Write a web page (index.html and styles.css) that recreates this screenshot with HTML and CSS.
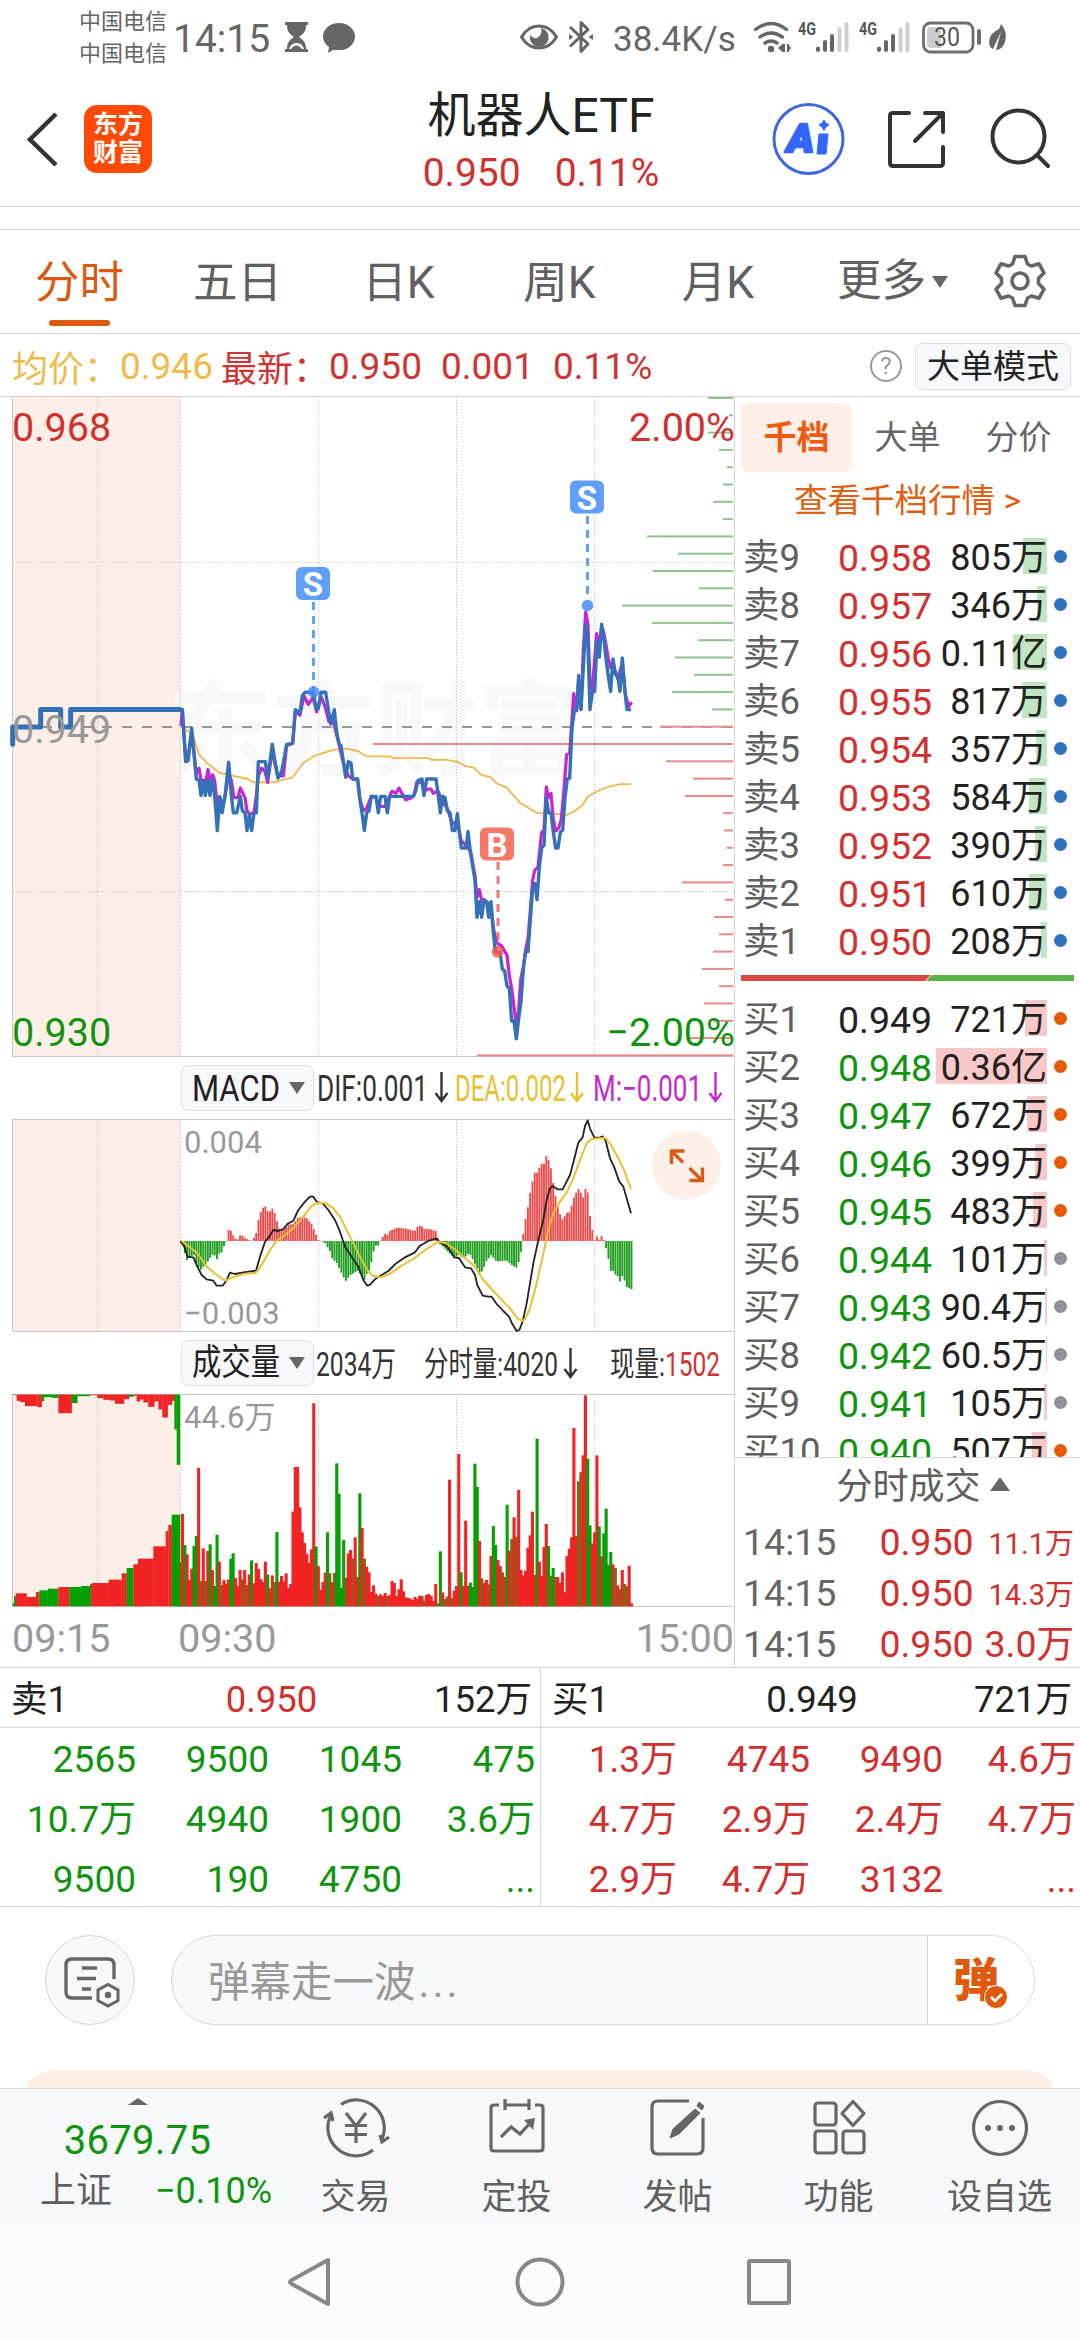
FILE: index.html
```html
<!DOCTYPE html>
<html lang="zh-CN">
<head>
<meta charset="utf-8">
<title>机器人ETF</title>
<link rel="stylesheet" href="styles.css">
</head>
<body>
<div class="status">
  <div class="carriers"><span>中国电信</span><span>中国电信</span></div>
  <span class="clock">14:15</span>
  <svg class="status-left" width="80" height="40" viewBox="280 16 80 40">
    <path fill="#666" d="M285 21h23v3h-2c0 7-3 9-7 12c4 3 7 5 7 12h2v3h-23v-3h2c0-7 3-9 7-12c-4-3-7-5-7-12h-2z"/><path fill="#fff" d="M289 48c1-4 4-6 7.500-6s6.500 2 7.500 6z" opacity=".9"/><path fill="#666" d="M291 48q5-7 11 0z"/>
    <path fill="#666" d="M339 22c9 0 16 6 16 13.500s-7 13.500-14 13.500q-6 0-8 0l-5 3l1-6c-4-3-6-6-6-10.500c0-7.500 7-13.500 16-13.500z"/>
  </svg>
  <svg class="status-mid" width="80" height="40" viewBox="516 16 80 40">
    <path fill="none" stroke="#666" stroke-width="3" d="M521.500 36Q528 25 539 25T556.500 36Q550 47 539 47T521.500 36z"/><path d="M541 27a9.500 9.500 0 1 1-11 7q3 4 7 3q6-3 4-10z" fill="#666"/>
    <path fill="none" stroke="#666" stroke-width="3" stroke-linejoin="round" d="M570 26l18 17l-7 7.500v-29l7 7l-18 17"/><path d="M569 33l4.500 3l-4.500 3zM593 33l-4.500 3l4.500 3z" fill="#666"/>
  </svg>
  <span class="rate">38.4K/s</span>
  <svg class="status-right" width="260" height="40" viewBox="752 16 260 40">
    <g fill="none" stroke="#666" stroke-width="3.400" stroke-linecap="round"><path d="M756.500 28.500q15.500-12 31 0M761 36q11-8 22.500 0M766 42q6-4 12 0"/></g>
    <circle cx="772" cy="48" r="3.200" fill="#666"/><path d="M785 43v8M789 43v8" stroke="#666" stroke-width="2"/><path fill="#666" d="M779 47l5-4.500v9zM792 47l-3-4v8z"/>
    <g fill="#555"><text x="799" y="34" class="net" textLength="18" lengthAdjust="spacingAndGlyphs">4G</text><text x="860" y="34" class="net" textLength="18" lengthAdjust="spacingAndGlyphs">4G</text></g>
    <g stroke="#666" stroke-width="4" stroke-linecap="round"><path d="M819 47.500v1.500M826 41v8M833 35v14M880 47.500v1.500M887 41v8M894 35v14"/></g>
    <g stroke="#cfcfcf" stroke-width="4" stroke-linecap="round"><path d="M840.500 28v21M847.500 23v26M901.500 28v21M908.500 23v26"/></g>
    <path d="M942 26V47H932Q928 47 928 43V30Q928 26 932 26z" fill="#ccc"/><rect x="924.500" y="22" width="49.500" height="29" rx="7" fill="none" stroke="#6e6e6e" stroke-width="2.800"/><path d="M980 30v12" stroke="#6e6e6e" stroke-width="4" stroke-linecap="round"/>
    <text x="935" y="45" class="batt" textLength="26" lengthAdjust="spacingAndGlyphs">30</text>
    <path fill="#666" d="M1002 23q7 8 4 18q-2 7-9 8l5-18l-8 17q-5-2-3.500-10q1.500-6 8-9q3-2 3.500-6z"/>
  </svg>
</div>

<header class="header">
  <svg class="back" width="40" height="60" viewBox="24 109 40 60"><path d="M56 114L30 139.500L56 165" fill="none" stroke="#333" stroke-width="4.500"/></svg>
  <div class="logo"><span>东方</span><span>财富</span></div>
  <div class="title"><h1>机器人ETF</h1><p><span>0.950</span><span>0.11%</span></p></div>
  <svg class="tools" width="290" height="80" viewBox="768 99 290 80">
    <circle cx="808.500" cy="139" r="34.500" fill="none" stroke="#3f66e0" stroke-width="3"/>
    <text x="787" y="151.500" class="ai" textLength="27" lengthAdjust="spacingAndGlyphs">A</text><path d="M819 134h9l-2 20h-9zM824 120q1.500 4 5 5q-3.500 1-5 5.500q-1.500-4.500-5-5.500q3.500-1 5-5z" fill="#3366ff" stroke="#3366ff" stroke-width="1" stroke-linejoin="round"/>
    <g fill="none" stroke="#333" stroke-width="4" stroke-linecap="round" stroke-linejoin="round"><path d="M909 113H893Q890 113 890 116V163Q890 166 893 166H940Q943 166 943 163V147M925 113H943V132M942 114L915 141"/><circle cx="1018.500" cy="136.500" r="26"/><path d="M1037 155l11 11"/></g>
  </svg>
</header>
<div class="strip"></div>

<nav class="tabs">
  <span class="tab on">分时</span><span class="tab">五日</span><span class="tab">日K</span><span class="tab">周K</span><span class="tab">月K</span><span class="tab more">更多<i class="down"></i></span>
  <svg class="gear" width="56" height="56" viewBox="0 0 56 56"><g fill="none" stroke="#666" stroke-width="3.600" stroke-linejoin="round"><path d="M23 3.500h10l2.500 7.500l4 2l7.500-2.200l5 9l-5.500 5.700v5l5.500 5.700l-5 9l-7.500-2.200l-4 2l-2.500 7.500h-10l-2.500-7.500l-4-2l-7.500 2.200l-5-9l5.500-5.700v-5l-5.500-5.700l5-9l7.500 2.200l4-2z"/><circle cx="28" cy="28" r="8"/></g></svg>
</nav>

<div class="info">
  <span class="avg">均价：</span><span class="avg v1">0.946</span><span class="last">最新：</span><span class="last v2">0.950</span><span class="last v3">0.001</span><span class="last v4">0.11%</span>
  <span class="help">?</span><span class="mode">大单模式</span>
</div>

<main class="main">
<section class="charts">
  <svg class="price" width="734" height="660" viewBox="0 397 734 660">
    <rect x="13" y="397" width="168" height="659" fill="#fdeee7"/>
    <text x="168" y="768" class="mark" textLength="414">东方财富</text>
    <g class="grid"><path d="M97.500 397V1056M180.500 397V1056M318.500 397V1056M456.500 397V1056M594.500 397V1056M13 562.500H734M13 891.500H734"/></g>
    <path d="M12.500 397V1056.500H734" class="frame"/>
    <path d="M22 727H734" stroke="#777" stroke-width="1.500" stroke-dasharray="10 10"/>
    <g id="depth"></g>
    <text x="12" y="441" class="lbl red">0.968</text><text x="735" y="441" class="lbl red end">2.00%</text>
    <g transform="translate(0 390) scale(.33333 .43367)" class="lines">
      <polyline class="auction" points="38,817 38,777 122,777 122,737 182,737 182,777 212,777 212,737 540,737"/>
      <polyline class="mean" points="543,777 565,787 578,795 597,840 620,860 660,883 700,890 745,897 760,905 820,905 878,893 910,860 945,843 1000,830 1040,827 1075,833 1100,845 1170,845 1180,849 1285,849 1295,853 1340,853 1370,857 1400,868 1420,870 1445,888 1470,892 1490,907 1520,917 1560,952 1610,975 1680,978 1695,981 1720,973 1748,957 1763,938 1800,922 1825,915 1860,909 1893,909"/>
      <polyline class="index" points="543,775 547,737 557,850 564,850 575,790 589,885 597,872 603,900 617,905 624,875 630,900 638,887 644,900 652,960 660,940 668,960 675,937 686,885 694,900 702,940 714,940 721,918 735,940 741,970 748,978 762,975 769,935 775,890 785,872 795,880 803,905 817,830 827,870 834,890 850,890 860,820 878,815 886,740 900,750 912,705 925,725 940,708 950,742 963,707 975,730 987,765 1000,765 1015,810 1030,860 1045,890 1060,897 1073,900 1080,945 1090,970 1100,965 1114,937 1128,940 1135,960 1155,960 1169,937 1176,925 1188,930 1197,918 1217,945 1235,940 1242,935 1250,905 1265,905 1272,925 1285,920 1293,920 1300,930 1314,925 1328,950 1342,965 1357,1000 1372,995 1384,1040 1398,1050 1412,1065 1425,1120 1431,1170 1438,1152 1446,1180 1460,1180 1473,1190 1480,1240 1490,1275 1505,1282 1521,1303 1528,1350 1535,1380 1549,1465 1556,1430 1562,1360 1570,1330 1577,1290 1584,1265 1591,1200 1598,1130 1604,1108 1614,1100 1625,1020 1632,1015 1639,915 1645,940 1653,930 1660,990 1667,1017 1676,1010 1684,990 1691,930 1700,840 1709,838 1716,760 1721,700 1730,740 1736,670 1743,735 1750,600 1757,512 1764,540 1770,680 1777,690 1784,620 1790,562 1798,590 1805,545 1813,565 1825,620 1832,640 1839,635 1853,665 1867,630 1877,705 1886,730 1895,720"/>
      <polyline class="last-price" points="540,737 547,737 557,857 564,855 575,780 589,897 597,900 603,935 610,900 616,935 624,900 630,935 637,897 644,935 652,1016 659,937 666,975 675,937 680,900 686,858 694,935 700,975 710,975 721,937 727,970 735,975 741,1016 748,980 755,1016 762,975 769,975 775,857 796,857 803,895 817,817 825,857 834,895 845,880 860,817 878,815 886,737 900,745 907,705 915,697 940,697 948,735 955,735 963,697 977,697 985,737 992,770 1003,737 1010,790 1018,817 1023,820 1030,857 1037,893 1045,857 1053,860 1058,897 1073,897 1079,940 1086,975 1093,1016 1100,975 1107,970 1114,937 1128,937 1135,975 1142,937 1155,937 1162,975 1169,937 1240,937 1247,925 1254,900 1266,897 1272,935 1280,897 1308,897 1314,930 1321,975 1328,937 1335,940 1342,970 1350,975 1357,1016 1365,1016 1372,977 1378,1020 1384,1056 1398,1056 1404,1018 1412,1070 1425,1130 1431,1216 1438,1180 1445,1216 1452,1175 1460,1180 1466,1216 1473,1180 1480,1250 1486,1295 1500,1297 1507,1335 1514,1340 1521,1375 1528,1380 1535,1455 1542,1455 1549,1496 1556,1450 1563,1410 1570,1335 1577,1295 1584,1295 1591,1220 1598,1150 1605,1138 1611,1175 1618,1100 1625,1056 1632,1050 1639,940 1646,975 1653,975 1660,1020 1667,1056 1674,1056 1681,1020 1688,1015 1695,940 1702,897 1709,895 1716,780 1723,740 1730,735 1736,658 1743,737 1750,640 1757,540 1763,570 1770,737 1777,697 1784,695 1791,580 1798,616 1805,540 1812,575 1818,620 1825,660 1832,695 1839,620 1846,655 1853,660 1860,695 1867,618 1874,690 1881,737 1893,737"/>
    </g>
    <text x="12" y="743" class="lbl grey">0.949</text>
    <text x="12" y="1046" class="lbl green">0.930</text><text x="735" y="1046" class="lbl green end">−2.00%</text>
    <g class="sell"><path d="M313.500 602V690M587.500 516V600"/><circle cx="313.500" cy="692" r="5.800"/><circle cx="587.500" cy="605.500" r="5.800"/><rect x="296" y="567" width="34" height="33" rx="6"/><rect x="570" y="480.500" width="34" height="33" rx="6"/><text x="313" y="596">S</text><text x="587" y="509.500">S</text></g>
    <g class="buy"><path d="M498 862V948"/><circle cx="497.500" cy="952" r="5.800"/><rect x="480" y="827.500" width="34" height="33" rx="6"/><text x="497" y="856.500">B</text></g>
  </svg>
  <div class="legend">
    <span class="pick"><svg width="88" height="34"><text x="0" y="29.500" class="ink" textLength="88" lengthAdjust="spacingAndGlyphs">MACD</text></svg><i class="down"></i></span>
    <svg width="420" height="62" viewBox="314 1057 420 62" class="vals">
      <text x="317" y="1101" fill="#333" textLength="111" lengthAdjust="spacingAndGlyphs">DIF:0.001</text>
      <text x="455" y="1101" fill="#e8c030" textLength="111" lengthAdjust="spacingAndGlyphs">DEA:0.002</text>
      <text x="593" y="1101" fill="#c22ccc" textLength="109" lengthAdjust="spacingAndGlyphs">M:−0.001</text>
      <g fill="none" stroke-width="2.400"><path stroke="#333" d="M441.500 1072v29m-6-8l6 8l6-8"/><path stroke="#e8c030" d="M577 1072v29m-6-8l6 8l6-8"/><path stroke="#c22ccc" d="M715.500 1072v29m-6-8l6 8l6-8"/></g>
    </svg>
  </div>
  <svg class="macd" width="734" height="213" viewBox="0 1119 734 213">
    <rect x="13" y="1120" width="168" height="211" fill="#fdeee7"/>
    <g class="grid"><path d="M97.500 1120V1331M180.500 1120V1331M318.500 1120V1331M456.500 1120V1331M594.500 1120V1331"/></g>
    <path d="M734 1119.500H12.500V1331.500H734" class="frame"/>
    <g id="hist"></g>
    <g transform="translate(0 1050) scale(.33333)" class="lines">
      <polyline class="dif" points="541,573 553,590 562,620 580,622 592,650 605,675 620,688 640,692 650,707 668,707 680,690 690,668 705,672 730,667 768,662 780,620 795,575 808,560 820,540 835,543 850,537 862,522 880,512 895,480 915,455 930,440 940,440 950,455 970,462 985,480 1005,510 1020,545 1035,590 1055,620 1075,650 1090,690 1102,707 1110,704 1125,688 1145,675 1165,663 1185,643 1215,622 1245,607 1260,587 1285,573 1310,565 1320,578 1340,588 1355,610 1363,622 1377,624 1395,652 1413,655 1425,675 1432,705 1448,737 1465,740 1475,740 1490,762 1510,783 1527,800 1535,818 1550,843 1558,840 1568,815 1580,760 1590,700 1600,640 1615,570 1630,510 1640,450 1650,415 1658,408 1672,418 1688,418 1710,375 1722,330 1735,278 1748,262 1755,228 1763,211 1770,235 1783,263 1800,262 1808,259 1817,272 1830,325 1842,350 1858,395 1870,410 1883,455 1893,490"/>
      <polyline class="dea" points="545,573 570,592 590,607 620,650 650,675 675,692 700,682 730,672 768,668 785,645 810,600 830,572 850,558 880,535 910,500 935,468 955,458 978,460 1000,475 1020,500 1045,550 1070,600 1090,640 1105,665 1120,678 1140,682 1170,672 1200,650 1240,627 1280,597 1315,575 1340,580 1370,603 1400,628 1425,650 1450,690 1480,723 1510,755 1530,775 1550,803 1565,813 1575,808 1590,775 1610,700 1628,620 1645,540 1660,490 1680,455 1700,428 1720,385 1740,330 1760,280 1775,267 1815,263 1830,280 1850,315 1870,355 1893,417"/>
    </g>
    <text x="184" y="1153" class="sub">0.004</text><text x="184" y="1323.500" class="sub">−0.003</text>
    <circle cx="686.500" cy="1165" r="34.500" fill="#fef0e9"/><path d="M671.500 1164v-13h13M672 1151.500l11 11M702.500 1167.500v13h-13M701 1179.500l-11.500-11.500" fill="none" stroke="#dc5a14" stroke-width="3.400"/>
  </svg>
  <div class="legend">
    <span class="pick"><svg width="88" height="40"><text x="0" y="32" class="ink" textLength="88" lengthAdjust="spacingAndGlyphs">成交量</text></svg><i class="down"></i></span>
    <svg width="420" height="62" viewBox="314 1332 420 62" class="vals small">
      <text x="316" y="1376" fill="#333" textLength="80" lengthAdjust="spacingAndGlyphs">2034万</text>
      <text x="424" y="1376" fill="#333" textLength="134" lengthAdjust="spacingAndGlyphs">分时量:4020</text>
      <text x="610" y="1376" textLength="110" lengthAdjust="spacingAndGlyphs"><tspan fill="#333">现量:</tspan><tspan fill="#cf3432">1502</tspan></text>
      <path fill="none" stroke="#333" stroke-width="2.400" d="M570.500 1348v29m-6-8l6 8l6-8"/>
    </svg>
  </div>
  <svg class="volume" width="734" height="213" viewBox="0 1394 734 213">
    <rect x="13" y="1394" width="168" height="212" fill="#fdeee7"/>
    <g class="grid"><path d="M97.500 1394V1606M180.500 1394V1606M318.500 1394V1606M456.500 1394V1606M594.500 1394V1606"/></g>
    <path d="M734 1394.500H12.500V1606.500H734" class="frame"/>
    <g id="bars"></g>
    <text x="184" y="1428" class="sub">44.6万</text>
  </svg>
  <div class="axis"><span>09:15</span><span>09:30</span><span>15:00</span></div>
</section>

<aside class="book">
  <div class="book-tabs"><span class="on">千档</span><span>大单</span><span>分价</span></div>
  <div class="book-link">查看千档行情 &gt;</div>
  <div class="rows" id="sells"></div>
  <div class="ratio"><svg width="333" height="6"><path d="M0 0H190L184 6H0z" fill="#d84a46"/><path d="M191 0H333V6H185z" fill="#5bb348"/></svg></div>
  <div class="rows buys" id="buys"></div>
  <div class="deals">
    <div class="deals-title">分时成交<i class="up"></i></div>
    <div class="deal"><span>14:15</span><b>0.950</b><em class="s">11.1万</em></div>
    <div class="deal"><span>14:15</span><b>0.950</b><em class="s">14.3万</em></div>
    <div class="deal"><span>14:15</span><b>0.950</b><em>3.0万</em></div>
  </div>
</aside>
</main>

<section class="queue">
  <div class="side">
    <div class="qhead"><span>卖1</span><span class="red">0.950</span><span>152万</span></div>
    <div class="qgrid green"><span>2565</span><span>9500</span><span>1045</span><span>475</span><span>10.7万</span><span>4940</span><span>1900</span><span>3.6万</span><span>9500</span><span>190</span><span>4750</span><span>...</span></div>
  </div>
  <div class="side">
    <div class="qhead"><span>买1</span><span>0.949</span><span>721万</span></div>
    <div class="qgrid red"><span>1.3万</span><span>4745</span><span>9490</span><span>4.6万</span><span>4.7万</span><span>2.9万</span><span>2.4万</span><span>4.7万</span><span>2.9万</span><span>4.7万</span><span>3132</span><span>...</span></div>
  </div>
</section>

<section class="chat">
  <span class="round"><svg width="60" height="60" viewBox="60 1950 60 60"><g fill="none" stroke="#666" stroke-width="3.400"><path d="M92 1998H72Q66 1998 66 1992V1965Q66 1959 72 1959H108Q114 1959 114 1965V1979M82 1968h15M77 1978.500h19M82 1989h9"/><path d="M108 1984.500l10 5.500v10.500l-10 5.500l-10-5.500v-10.500z" stroke-width="3"/></g><circle cx="108" cy="1995" r="3.200" fill="#666"/></svg></span>
  <div class="field"><span class="hint">弹幕走一波<span class="dots">...</span></span><span class="danmu"><b>弹</b><svg width="24" height="24" viewBox="0 0 24 24"><circle cx="12" cy="12" r="11.500" fill="#e05a0c" stroke="#fff"/><path d="M7 12l4 4l7-7" fill="none" stroke="#fff" stroke-width="2.600"/></svg></span></div>
</section>
<div class="banner"></div>

<footer class="dock">
  <div class="idx"><i class="up"></i><strong>3679.75</strong><p><span>上证</span><span class="green">−0.10%</span></p></div>
  <a><svg width="68" height="64" viewBox="-34 -32 68 64"><g fill="none" stroke="#666" stroke-width="3.200"><path d="M-15 -23.500A28 28 0 0 1 26 11M17 22A28 28 0 0 1 -25 -13M33 9l-7 5l-2-7M-32 -10l7-5l2 8"/><path d="M-10 -15l10 13l10-13M-11 -2.500h22M-11 6.500h22M0 -2v17"/></g></svg>交易</a>
  <a><svg width="68" height="64" viewBox="-34 -32 68 64"><g fill="none" stroke="#666" stroke-width="3.200"><path d="M-18 -23H-23Q-26 -23 -26 -20V20Q-26 23 -23 23H23Q26 23 26 20V-20Q26 -23 23 -23H18M-12 -29v11M12 -29v11M-12 -23h24M-16 9l10-10l9 7l11-12"/></g><path d="M7 -8l11-2l-2 12z" fill="#666"/></svg>定投</a>
  <a><svg width="68" height="64" viewBox="-34 -32 68 64"><g fill="none" stroke="#666" stroke-width="3.200"><path d="M11 -27H-20Q-26 -27 -26 -21V20Q-26 26 -20 26H19Q25 26 25 20V-10"/></g><path d="M21 -26l5 4l-2 4l-5-4zM17 -19l5 4l-21 21l-9 4l3-9z" stroke="#666" stroke-width="1" fill="#666"/></svg>发帖</a>
  <a><svg width="68" height="64" viewBox="-34 -32 68 64"><g fill="none" stroke="#666" stroke-width="3.200"><rect x="-24" y="-25" width="21" height="22" rx="3"/><path d="M14 -26.500l11 12l-11 12l-11-12z" stroke-linejoin="round"/><rect x="-24" y="3" width="21" height="22" rx="3"/><rect x="4" y="3" width="21" height="22" rx="3"/></g></svg>功能</a>
  <a><svg width="68" height="64" viewBox="-34 -32 68 64"><circle r="26.500" fill="none" stroke="#666" stroke-width="3.200"/><g fill="#666"><circle cx="-12" r="3"/><circle r="3"/><circle cx="12" r="3"/></g></svg>设自选</a>
</footer>
<div class="sys">
  <svg width="520" height="60" viewBox="280 2252 520 60"><g fill="none" stroke="#888" stroke-width="4" stroke-linejoin="round"><path d="M328 2260V2304L291 2283.500Q289 2282 291 2280.500z"/><circle cx="540" cy="2282" r="22.500"/><rect x="749" y="2261" width="40" height="42" rx="1"/></g></svg>
</div>
<script src="chart.js"></script>
</body>
</html>
```
FILE: styles.css
```css
* { box-sizing: border-box; }
body { margin: 0; width: 1080px; height: 2340px; overflow: hidden; background: #fff; color: #222; font-family: Roboto, "Noto Sans CJK SC", sans-serif; display: flex; flex-direction: column; }
i, em { font-style: normal; }
h1, p { margin: 0; font-weight: 400; }
svg { display: block; flex: none; overflow: visible; }
.red { color: #d0302e; fill: #d0302e; }
.green { color: #109410; fill: #109410; }
.grey { fill: #999; }
.down { border: 8px solid transparent; border-top: 12px solid #666; border-bottom: 0; }
.up { border: 10px solid transparent; border-bottom: 14px solid #666; border-top: 0; }

.status { height: 78px; flex: none; display: flex; align-items: center; color: #666; padding: 0 68px 4px 79px; }
.carriers { display: flex; flex-direction: column; font-size: 22px; line-height: 32px; width: 94px; padding-top: 1px; white-space: nowrap; }
.clock { font-size: 39px; width: 107px; line-height: 40px; padding-top: 3px; }
.status-mid { margin-left: 156px; }
.rate { font-size: 35px; width: 138px; margin-left: 17px; padding-top: 4px; white-space: nowrap; }
.net { font-size: 18px; font-weight: 700; }
.batt { font-size: 25px; fill: #555; }

.header { height: 129px; flex: none; display: flex; align-items: center; border-bottom: 1px solid #d5d5d8; padding: 0 22px 6px 24px; }
.logo { width: 68px; height: 68px; margin-left: 20px; border-radius: 13px; background: #ff4a05; color: #fff; font-weight: 700; font-size: 25px; line-height: 28px; display: flex; flex-direction: column; align-items: center; justify-content: center; }
.title { flex: 1; text-align: center; padding: 7px 0 0 162px; }
.title h1 { font-size: 48px; line-height: 56px; margin-top: 4px; }
.title p { display: flex; justify-content: center; gap: 34px; font-size: 39px; line-height: 58px; color: #d0302e; }
.ai { font-size: 39px; font-weight: 900; font-style: italic; fill: #3366ff; stroke: #3366ff; stroke-width: 2.500; stroke-linejoin: round; }
.strip { height: 23px; flex: none; border-bottom: 1px solid #d5d5d8; }

.tabs { height: 104px; flex: none; border-bottom: 1px solid #d5d5d8; display: grid; grid-template-columns: 159px 157px 165px 157px 160px 189px 93px; align-items: center; color: #606060; font-size: 44.500px; }
.tab { text-align: center; height: 103px; line-height: 107px; position: relative; }
.tab.on { color: #dc5a10; }
.tab.on::after { content: ""; position: absolute; left: 49px; bottom: 7px; width: 61px; height: 6px; border-radius: 3px; background: #dc5a10; }
.more { display: flex; align-items: center; justify-content: center; gap: 6px; }
.gear { margin: -2px 0 0 5px; }

.info { height: 63px; flex: none; border-bottom: 1px solid #d5d5d8; display: flex; align-items: center; font-size: 37px; padding: 2px 9px 0 12px; white-space: nowrap; }
.avg { color: #efbb4a; }
.last { color: #cf3432; }
.info span:nth-child(1), .info span:nth-child(3) { font-size: 36px; width: 108px; }
.v1 { width: 101px; }
.v2 { width: 112px; }
.v3 { width: 112px; }
.v4 { flex: 1; }
.help { width: 32px; height: 32px; border: 2px solid #999; border-radius: 50%; color: #999; font-size: 24px; line-height: 28px; text-align: center; margin-right: 13px; }
.mode { width: 156px; height: 47px; border: 1px solid #dcdde2; border-radius: 7px; background: #f7f8fb; font-size: 33px; line-height: 46px; text-align: center; }

.main { height: 1271px; flex: none; display: flex; border-bottom: 1px solid #d5d5d8; }
.charts { width: 735px; border-right: 1px solid #d5d5d8; display: flex; flex-direction: column; }
.frame { fill: none; stroke: #c8c8c8; }
.grid path { stroke: #bbb; stroke-dasharray: 1 2; }
.mark { font-size: 104px; font-weight: 700; fill: #f8f8f8; }
.lbl { font-size: 39.500px; }
.end { text-anchor: end; }
.sub { font-size: 31px; fill: #999; }
.lines polyline { fill: none; vector-effect: non-scaling-stroke; stroke-linejoin: round; }
.auction { stroke: #3370b8; stroke-width: 5; stroke-linecap: round; }
.mean { stroke: #f0b850; stroke-width: 1.800; }
.index { stroke: #c824d4; stroke-width: 3.200; }
.last-price { stroke: #3472b8; stroke-width: 3.400; }
.dif { stroke: #222; stroke-width: 1.800; }
.dea { stroke: #e8c030; stroke-width: 2; }
.sell path, .buy path { stroke: #3d8af7; stroke-opacity: .8; stroke-width: 3; stroke-dasharray: 8 6; }
.sell { fill: #3d8af7; }
.buy { fill: #f45a48; }
.buy path { stroke: #e8584c; }
.sell rect, .buy rect, .sell circle, .buy circle { fill-opacity: .82; }
.sell text, .buy text { fill: #fff; font-size: 33px; font-weight: 700; text-anchor: middle; }
.legend { height: 62px; display: flex; align-items: center; padding-left: 181px; }
.pick { width: 133px; height: 46px; border: 1px solid #dfe0e6; border-radius: 7px; background: #f7f8fb; display: flex; align-items: center; gap: 9px; padding-left: 10px; }
.ink { fill: #222; font-size: 36px; }
.vals { font-size: 36px; }
.small { font-size: 34px; }
.axis { flex: 1; display: grid; grid-template-columns: 166px 1fr auto; padding: 0 0 0 12px; font-size: 39.500px; line-height: 64px; color: #999; }

.book { width: 345px; height: 1270px; overflow: hidden; display: flex; flex-direction: column; }
.book-tabs { height: 66px; margin: 6px 6px 0; display: grid; grid-template-columns: repeat(3, 1fr); text-align: center; font-size: 33px; line-height: 69px; color: #666; flex: none; }
.book-tabs .on { background: #fdeee7; border-radius: 8px; color: #f05a10; font-weight: 700; }
.book-link { height: 62px; flex: none; text-align: center; color: #e0600f; font-size: 33.500px; line-height: 64px; }
.row { height: 48px; display: grid; grid-template-columns: 95px 1fr 33px; align-items: center; padding-left: 8px; font-size: 37.500px; line-height: 46px; white-space: nowrap; }
.row .name { color: #606060; font-size: 36.500px; }
.row .name, .row .cost { padding-top: 4px; }
.row .cell { display: grid; grid-template-columns: auto 1fr; align-items: center; }
.qty { height: 36px; line-height: 40px; text-align: right; font-size: 36px; background-repeat: no-repeat; background-position: right; }
.dot { width: 13px; height: 13px; border-radius: 50%; margin-left: 7px; }
.ratio { height: 30px; flex: none; padding: 12px 6px; }
.buys { height: 464px; overflow: hidden; flex: none; }
.deals { border-top: 1px solid #d5d5d8; flex: 1; }
.deals-title { display: flex; align-items: center; justify-content: center; gap: 9px; font-size: 36px; line-height: 60px; height: 58px; color: #606060; padding-left: 31px; }
.deals-title .up { margin-top: -6px; }
.deal { height: 51px; line-height: 53px; display: flex; padding: 0 6px 0 8px; font-size: 37.500px; color: #666; }
.deal b { font-weight: 400; color: #d0302e; margin-left: 43px; flex: 1; }
.deal em { color: #d0302e; }
.deal .s { font-size: 29px; padding-top: 2px; }

.queue { height: 239px; flex: none; display: flex; border-bottom: 1px solid #d5d5d8; }
.side { width: 540px; }
.side + .side { border-left: 1px solid #d5d5d8; }
.qhead { height: 60px; border-bottom: 1px solid #d5d5d8; display: grid; grid-template-columns: 1fr auto 1fr; padding: 0 8px 0 11px; font-size: 36.500px; line-height: 64px; }
.qhead span:last-child { text-align: right; }
.qgrid { display: grid; grid-template-columns: 136px repeat(3, 133px); grid-auto-rows: 60px; text-align: right; font-size: 37px; line-height: 64px; }

.chat { height: 163px; flex: none; padding: 28px 45px 0; display: flex; gap: 36px; }
.round { width: 90px; height: 90px; border-radius: 50%; border: 1px solid #d5d6da; background: #f7f8fa; display: flex; align-items: center; justify-content: center; }
.field { width: 864px; height: 90px; border-radius: 45px; border: 1px solid #d5d6da; background: #f7f8fa; display: flex; overflow: hidden; }
.hint { flex: 1; padding-left: 36px; font-size: 41.500px; line-height: 93px; color: #999; }
.dots { letter-spacing: 3px; padding-left: 3px; }
.danmu { width: 107px; background: #fff; border-left: 1px solid #d5d6da; color: #e05a0c; position: relative; padding-left: 25px; font-size: 46px; line-height: 88px; }
.danmu b { font-weight: 900; }
.danmu svg { position: absolute; left: 56px; top: 49px; }
.banner { height: 18px; flex: none; margin: 0 27px; background: #fdeee5; border-radius: 34px 34px 0 0 / 18px 18px 0 0; }

.dock { height: 136px; flex: none; border-top: 1px solid #d5d6da; background: #f7f8fa; display: grid; grid-template-columns: 275px repeat(5, 161px); color: #606060; font-size: 35px; }
.dock a { display: flex; flex-direction: column; align-items: center; padding-top: 7px; line-height: 70px; }
.dock a svg { margin-bottom: 3px; }
.idx { display: flex; flex-direction: column; align-items: center; padding-top: 9px; }
.idx .up { border-bottom-width: 7px; margin-bottom: 6px; }
.idx strong { font-weight: 400; color: #109410; font-size: 40px; line-height: 60px; height: 55px; letter-spacing: .300px; }
.idx p { display: flex; align-items: center; gap: 43px; line-height: 50px; font-size: 36px; padding-left: 37px; }
.sys { flex: 1; background: #fcfcfc; padding: 28px 0 0 280px; }
```
FILE: chart.js
```js
const NS = 'http://www.w3.org/2000/svg';
const RED = '#f22323', GREEN = '#04a004', MIX = '#86621a';

function rect(group, x, y, w, h, fill) {
  const r = document.createElementNS(NS, 'rect');
  r.setAttribute('x', x);
  r.setAttribute('y', y);
  r.setAttribute('width', w);
  r.setAttribute('height', h);
  r.setAttribute('fill', fill);
  group.appendChild(r);
}

// Order depth along the right edge: bar length for each 0.001 step, top to bottom
const depth = [25, 4, 25, 14, 6, 10, 20, 10, 86, 55, 80, 34, 111, 81, 35, 58, 39, 61, 21,
  73, 360, 67, 40, 48, 10, 9, 6, 10, 51, 8, 19, 14, 20, 31, 14, 29, 20, 45, 256];
const depthGroup = document.getElementById('depth');
depth.forEach((len, i) => rect(depthGroup, 733 - len, 397 + i * 17.300, len, 2, i < 19 ? '#8fc48f' : '#e58a88'));

// MACD histogram: envelope as x:value pairs, in thirds of a pixel
const env = ('548:-10 556:-40 562:-58 575:-45 582:-40 590:-70 602:-88 612:-75 625:-60 636:-42 643:-40 651:-56 658:-38 665:-35 672:-16 680:0 686:34 694:30 701:15 708:6 714:5 722:19 730:15 740:6 755:0 762:10 768:18 775:60 782:85 790:100 796:105 803:90 810:88 817:98 824:85 831:60 838:38 852:35 866:50 880:50 894:70 908:72 922:68 936:50 948:20 955:3 962:1 975:-5 990:-30 997:-52 1010:-65 1018:-82 1032:-110 1038:-120 1052:-102 1073:-90 1087:-105 1093:-118 1100:-100 1110:-85 1120:-35 1128:-14 1135:-14 1142:2 1155:22 1162:18 1170:30 1190:40 1215:38 1245:30 1252:42 1263:48 1273:36 1285:37 1308:30 1315:5 1322:-10 1342:-30 1363:-50 1377:-42 1392:-52 1405:-38 1412:-42 1425:-68 1440:-97 1448:-90 1460:-60 1474:-42 1490:-62 1520:-58 1535:-72 1550:-80 1556:-65 1565:-25 1570:20 1577:65 1583:95 1590:140 1597:175 1604:205 1612:205 1620:222 1625:232 1632:230 1639:255 1646:243 1652:225 1659:180 1666:140 1673:105 1680:82 1687:65 1695:75 1702:85 1708:85 1715:105 1722:130 1735:158 1743:145 1750:130 1757:157 1764:145 1770:78 1777:35 1784:1 1791:14 1798:4 1805:15 1812:3 1819:-22 1826:-55 1832:-90 1839:-88 1846:-100 1853:-105 1860:-122 1867:-105 1874:-118 1881:-138 1895:-145')
  .split(' ').map(p => p.split(':').map(Number));
const hist = document.getElementById('hist');
for (let x = 548, k = 0; x <= 1895; x += 6.907) {
  while (k < env.length - 2 && env[k + 1][0] < x) k++;
  const [x0, v0] = env[k], [x1, v1] = env[k + 1];
  const v = (v0 + (v1 - v0) * (x - x0) / (x1 - x0)) / 3;
  rect(hist, x / 3 - 1.100, v > 0 ? 1241 - v : 1241, 1.900, Math.abs(v), v > 0 ? '#e84c4c' : '#229e22');
}

// Minute volume: bar top and colour
const vol = '668R 522R 615G 643R 720R 686R 618G 588G 384R 723M 625R 723M 633R 613G 690R 738G 584G 665R 735M 720R 731R 718R 656G 640G 714R 738R 690R 718M 690R 735M 703R 661G 730R 669R 687R 717R 726R 665R 704G 745R 706R 726M 576G 726R 708R 724R 700R 744R 732R 515R 381R 381R 502R 577R 609R 641R 669R 628R 190R 619G 679R 750R 726R 698R 577G 700M 727R 699M 370G 461G 743G 600G 713M 640R 630R 655M 592R 711R 460G 564R 656M 680R 697R 756R 736R 761R 768M 763R 768R 759R 768M 766R 723R 729R 768R 748R 718R 754R 772R 774R 776R 780R 771R 777R 767R 768R 782M 765R 762R 768R 782R 732R 790G 634G 757R 777M 770M 419R 774M 752R 738R 342R 697G 738R 542R 738R 728G 741G 371G 441G 603R 715M 729R 720R 733M 648R 558G 615G 660R 678R 697M 711R 494G 632R 597M 532R 590M 450R 690R 706R 692R 624R 586R 515R 705R 296G 665R 708R 621R 552R 618G 707M 684G 711M 711R 729R 697R 757R 648R 626R 592R 264R 588R 424M 397M 346R 166R 356G 556G 610R 577R 346R 559G 649R 580G 506G 675G 636G 673R 684M 736R 747M 690R 732M 738M 677R 790R';
const tone = { R: RED, G: GREEN, M: MIX };
const bars = document.getElementById('bars');
vol.split(' ').forEach((s, i) => {
  const top = parseInt(s, 10);
  rect(bars, (536 + i * 6.907) / 3, 1340 + top / 3, 3.100, (799 - top) / 3, tone[s.slice(-1)]);
});

// Opening auction, matched volume: from, to, top, colour
'38 42 790 G|42 47 768 G|47 80 760 R|80 108 771 R|108 118 756 R|118 143 751 G|143 175 746 G|175 208 741 R|208 243 741 G|243 270 738 G|270 276 732 M|276 326 729 R|326 365 719 R|365 380 700 R|380 400 684 G|400 414 673 R|414 460 656 R|460 497 619 R|497 505 573 R|505 515 555 R|515 540 524 G'
  .split('|').forEach(s => {
    const [a, b, t, c] = s.split(' ');
    rect(bars, a / 3, 1340 + t / 3, (b - a) / 3 + .200, (799 - t) / 3, tone[c]);
  });
// Opening auction, unmatched volume hanging from the top
'38 50 165 G|50 60 182 R|60 75 186 R|75 112 198 R|112 125 201 R|125 132 183 G|132 155 171 G|155 175 173 G|175 215 219 R|215 232 189 G|232 270 168 G|270 292 165 R|292 310 174 R|310 330 179 R|330 345 181 R|345 372 191 R|372 387 177 R|387 400 170 G|400 410 167 R|410 420 184 R|420 430 178 R|430 445 187 R|445 463 200 R|463 475 184 R|475 487 208 R|487 503 232 R|503 516 194 R|516 524 182 R|523 530 268 G|530 540 374 G'
  .split('|').forEach(s => {
    const [a, b, t, c] = s.split(' ');
    rect(bars, a / 3, 1394.500, (b - a) / 3 + .200, (t - 163) / 3, tone[c]);
  });

// Order book: name, price, amount, bar width, dot colour
const BLUE = '#3070c0', ORANGE = '#e65a08', GREY = '#909096';
const sells = [['卖9', '0.958', '805万', 24], ['卖8', '0.957', '346万', 10], ['卖7', '0.956', '0.11亿', 34],
  ['卖6', '0.955', '817万', 25], ['卖5', '0.954', '357万', 11], ['卖4', '0.953', '584万', 18],
  ['卖3', '0.952', '390万', 12], ['卖2', '0.951', '610万', 18], ['卖1', '0.950', '208万', 6]];
const buys = [['买1', '0.949', '721万', 22, ORANGE], ['买2', '0.948', '0.36亿', 111, ORANGE], ['买3', '0.947', '672万', 20, ORANGE],
  ['买4', '0.946', '399万', 12, ORANGE], ['买5', '0.945', '483万', 14, ORANGE], ['买6', '0.944', '101万', 3, GREY],
  ['买7', '0.943', '90.4万', 2, GREY], ['买8', '0.942', '60.5万', 1, GREY], ['买9', '0.941', '105万', 3, GREY],
  ['买10', '0.940', '507万', 15, ORANGE]];
function fill(id, list, bar, cls) {
  document.getElementById(id).innerHTML = list.map(([n, p, q, w, dot]) =>
    `<div class="row"><span class="name">${n}</span><span class="cell"><span class="cost ${p === '0.949' ? '' : cls}">${p}</span>` +
    `<span class="qty" style="background-image:linear-gradient(${bar},${bar});background-size:${w}px 36px">${q}</span></span>` +
    `<i class="dot" style="background:${dot || BLUE}"></i></div>`).join('');
}
fill('sells', sells, '#c0e5c0', 'red');
fill('buys', buys, '#f9c9c9', 'green');
```
